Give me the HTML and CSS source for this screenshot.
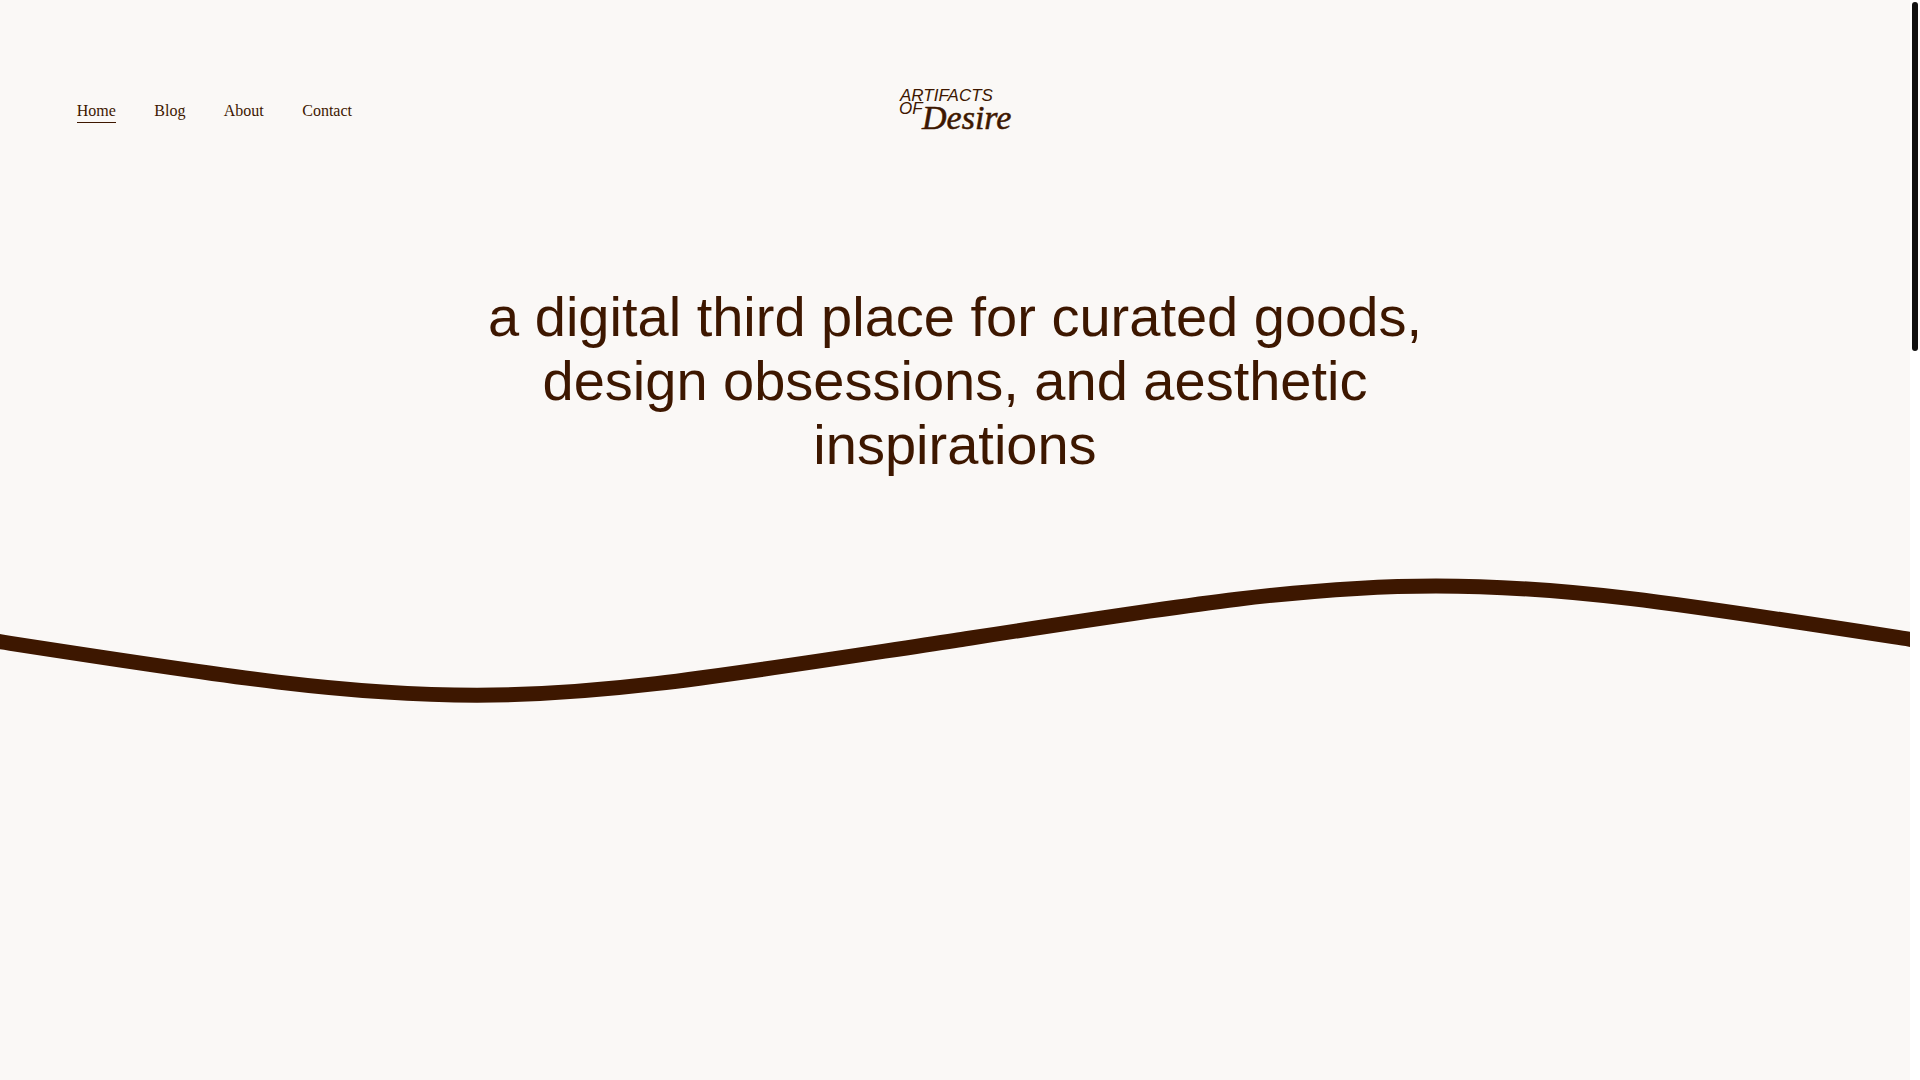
FILE: index.html
```html
<!DOCTYPE html>
<html lang="en">
<head>
  <meta charset="UTF-8">
  <meta name="viewport" content="width=device-width, initial-scale=1">
  <title>Artifacts of Desire</title>
  <link rel="stylesheet" href="styles.css">
</head>
<body>

  <div class="page">
    <header class="header">
      <nav class="nav">
        <a class="active" href="#">Home</a>
        <a href="#blog">Blog</a>
        <a href="#about">About</a>
        <a href="#contact">Contact</a>
      </nav>

      <a class="logo" href="#" aria-label="Artifacts of Desire">
        <svg width="120" height="48" viewBox="0 0 120 48">
          <text class="logo-sans" x="5" y="16">ARTIFACTS</text>
          <text class="logo-sans" x="4" y="29">OF</text>
          <text class="logo-serif" x="27" y="44">Desire</text>
        </svg>
      </a>
    </header>

    <main>
      <section class="hero">
        <h1>a digital third place for curated goods, design obsessions, and aesthetic inspirations</h1>
      </section>

      <svg class="wave" viewBox="0 0 1910 140" preserveAspectRatio="none" aria-hidden="true">
        <path d="M-20 68.6 L0 71.7 C229 107 345 125.2 477 125.2 C609 125.2 726 105 955 70.5 C1184 35 1304 15.9 1436 15.9 C1568 15.9 1681 33.9 1910 69.3 L1930 72.4"/>
      </svg>
    </main>
  </div>

  <div class="scrollbar" aria-hidden="true">
    <div class="thumb"></div>
  </div>

</body>
</html>
```

FILE: styles.css
```css
* {
  box-sizing: border-box;
}

body {
  margin: 0;
  min-height: 100vh;
  display: flex;
  background-color: #faf8f6;
  color: #3d1700;
  font-family: "Liberation Serif", serif;
  font-size: 16px;
}

.page {
  flex: 1;
  min-width: 0;
}

.header {
  display: grid;
  grid-template-columns: 1fr auto 1fr;
  align-items: center;
  padding: 85px 4vw 0;
}

.nav {
  display: flex;
  gap: 2vw;
}

.nav a {
  color: inherit;
  text-decoration: none;
  line-height: 22px;
  padding-top: 4px;
  border-bottom: 1px solid transparent;
}

.nav a.active {
  border-bottom-color: #3d1700;
}

.logo svg {
  display: block;
  overflow: visible;
  fill: #3d1700;
}

.logo-sans {
  font: italic 17px "Liberation Sans", sans-serif;
}

.logo-serif {
  font: italic 34px "Liberation Serif", serif;
  stroke: #3d1700;
  stroke-width: 0.5;
}

.hero {
  padding: 152px 24px 93px;
}

.hero h1 {
  max-width: 980px;
  margin: 0 auto;
  font-family: "Liberation Sans", sans-serif;
  font-size: 56px;
  font-weight: 400;
  line-height: 64px;
  text-align: center;
}

.wave {
  display: block;
  width: 100%;
  height: 140px;
}

.wave path {
  fill: none;
  stroke: #3d1700;
  stroke-width: 15px;
}

.scrollbar {
  width: 10px;
  height: 100vh;
  padding: 2px;
  background-color: #fff;
}

.thumb {
  height: 32.4%;
  border-radius: 3px;
  background-color: #111;
}
```
